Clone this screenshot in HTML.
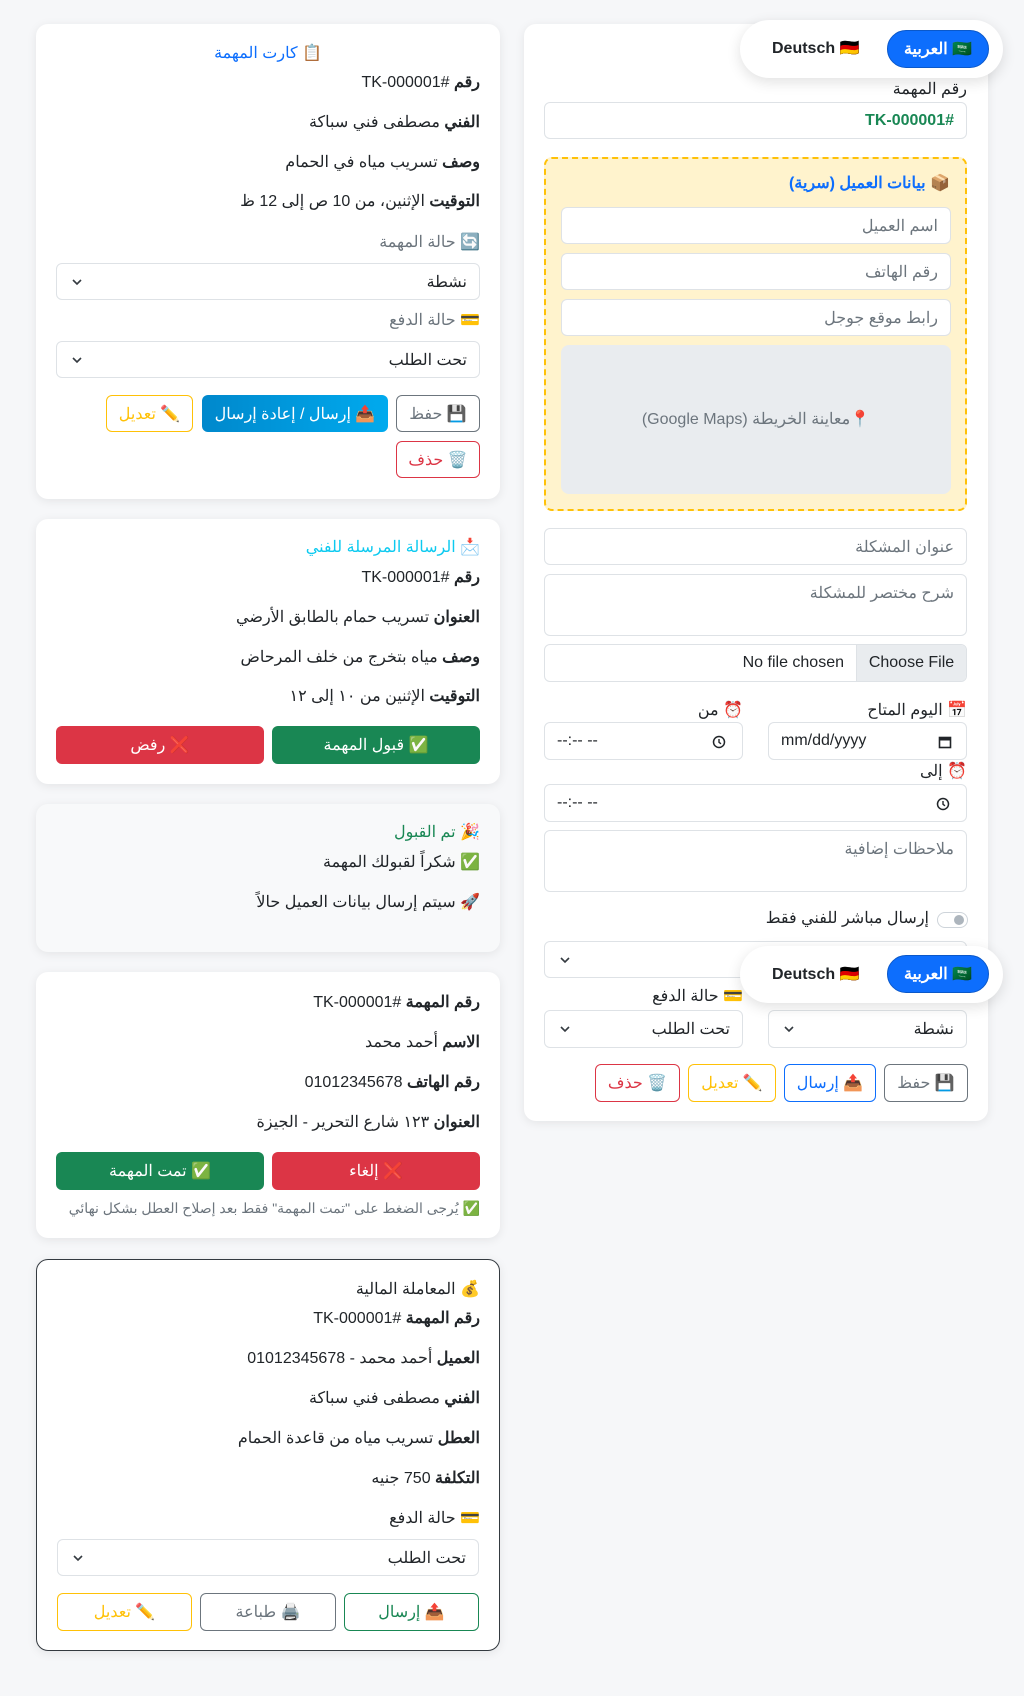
<!DOCTYPE html>
<html lang="ar" dir="rtl">
<head>
<meta charset="utf-8">
<style>
*{box-sizing:border-box;margin:0;padding:0}
html,body{width:1024px;height:1696px;background:#f6f7f9;overflow:hidden}
body{position:relative;font-family:"Liberation Sans","Noto Sans CJK SC",sans-serif;color:#212529;font-size:16px}
.c{position:absolute;background:#fff;border-radius:12px;box-shadow:0 2px 10px rgba(0,0,0,.08)}
.t{position:absolute;white-space:nowrap;direction:rtl;line-height:24px;font-size:16px}
.t b{font-weight:bold}
.f{position:absolute;border:1px solid #dee2e6;border-radius:6px;background:#fff}
.ph{position:absolute;right:12px;top:50%;transform:translateY(-50%);color:#6c757d;white-space:nowrap;direction:rtl}
.val{position:absolute;right:12px;top:50%;transform:translateY(-50%);color:#212529;white-space:nowrap;direction:rtl}
.chev{position:absolute;left:14px;top:50%;margin-top:-5px;width:12px;height:10px}
.b{position:absolute;display:flex;align-items:center;justify-content:center;border:1px solid;border-radius:6px;font-size:16px;white-space:nowrap;direction:rtl;background:#fff}
.pill{position:absolute;background:#fff;border-radius:30px;box-shadow:0 4px 14px rgba(0,0,0,.12)}
.ar{position:absolute;background:#0d6efd;color:#fff;border-radius:20px;font-weight:bold;display:flex;align-items:center;justify-content:center;border:1px solid #0a58ca}
.de{position:absolute;font-weight:bold;color:#212529;white-space:nowrap}
.tm{position:absolute;left:12px;top:50%;transform:translateY(-50%);white-space:nowrap}
</style>
</head>
<body>

<!-- LEFT CARD 1 -->
<div class="c" style="left:36px;top:24px;width:464px;height:475px"></div>
<div class="t" style="left:36px;width:464px;text-align:center;top:42px;color:#0d6efd">📋 كارت المهمة</div>
<div class="t" style="right:544px;top:71px"><b>رقم</b> #TK-000001</div>
<div class="t" style="right:544px;top:111px"><b>الفني</b> مصطفى فني سباكة</div>
<div class="t" style="right:544px;top:151px"><b>وصف</b> تسريب مياه في الحمام</div>
<div class="t" style="right:544px;top:190px"><b>التوقيت</b> الإثنين، من 10 ص إلى 12 ظ</div>
<div class="t" style="right:544px;top:231px;color:#6c757d">🔄 حالة المهمة</div>
<div class="f" style="left:56px;top:263px;width:424px;height:37px"><span class="val">نشطة</span><svg class="chev" viewBox="0 0 12 10"><path d="M2 3l4 4 4-4" fill="none" stroke="#343a40" stroke-width="1.6"/></svg></div>
<div class="t" style="right:544px;top:309px;color:#6c757d">💳 حالة الدفع</div>
<div class="f" style="left:56px;top:341px;width:424px;height:37px"><span class="val">تحت الطلب</span><svg class="chev" viewBox="0 0 12 10"><path d="M2 3l4 4 4-4" fill="none" stroke="#343a40" stroke-width="1.6"/></svg></div>
<div class="b" style="left:396px;top:395px;width:84px;height:37px;border-color:#6c757d;color:#6c757d">💾 حفظ</div>
<div class="b" style="left:202px;top:395px;width:186px;height:37px;border:none;color:#fff;background:linear-gradient(90deg,#0088cc,#00aaee)">📤 إرسال / إعادة إرسال</div>
<div class="b" style="left:106px;top:395px;width:87px;height:37px;border-color:#ffc107;color:#ffc107">✏️ تعديل</div>
<div class="b" style="left:396px;top:441px;width:84px;height:37px;border-color:#dc3545;color:#dc3545">🗑️ حذف</div>

<!-- LEFT CARD 2 -->
<div class="c" style="left:36px;top:519px;width:464px;height:265px"></div>
<div class="t" style="right:544px;top:536px;color:#0dcaf0">📩 الرسالة المرسلة للفني</div>
<div class="t" style="right:544px;top:566px"><b>رقم</b> #TK-000001</div>
<div class="t" style="right:544px;top:606px"><b>العنوان</b> تسريب حمام بالطابق الأرضي</div>
<div class="t" style="right:544px;top:646px"><b>وصف</b> مياه بتخرج من خلف المرحاض</div>
<div class="t" style="right:544px;top:685px"><b>التوقيت</b> الإثنين من ١٠ إلى ١٢</div>
<div class="b" style="left:272px;top:726px;width:208px;height:38px;border:none;background:#198754;color:#fff">✅ قبول المهمة</div>
<div class="b" style="left:56px;top:726px;width:208px;height:38px;border:none;background:#dc3545;color:#fff">❌ رفض</div>

<!-- LEFT CARD 3 -->
<div class="c" style="left:36px;top:804px;width:464px;height:148px;background:#f8f9fa"></div>
<div class="t" style="right:544px;top:821px;color:#198754">🎉 تم القبول</div>
<div class="t" style="right:544px;top:851px">✅ شكراً لقبولك المهمة</div>
<div class="t" style="right:544px;top:891px">🚀 سيتم إرسال بيانات العميل حالاً</div>

<!-- LEFT CARD 4 -->
<div class="c" style="left:36px;top:972px;width:464px;height:266px"></div>
<div class="t" style="right:544px;top:991px"><b>رقم المهمة</b> #TK-000001</div>
<div class="t" style="right:544px;top:1031px"><b>الاسم</b> أحمد محمد</div>
<div class="t" style="right:544px;top:1071px"><b>رقم الهاتف</b> 01012345678</div>
<div class="t" style="right:544px;top:1111px"><b>العنوان</b> ١٢٣ شارع التحرير - الجيزة</div>
<div class="b" style="left:272px;top:1152px;width:208px;height:38px;border:none;background:#dc3545;color:#fff">❌ إلغاء</div>
<div class="b" style="left:56px;top:1152px;width:208px;height:38px;border:none;background:#198754;color:#fff">✅ تمت المهمة</div>
<div class="t" style="right:544px;top:1198px;font-size:14px;line-height:20px;color:#6c757d">✅ يُرجى الضغط على "تمت المهمة" فقط بعد إصلاح العطل بشكل نهائي</div>

<!-- LEFT CARD 5 -->
<div class="c" style="left:36px;top:1259px;width:464px;height:392px;border:1px solid #343a40"></div>
<div class="t" style="right:544px;top:1278px">💰 المعاملة المالية</div>
<div class="t" style="right:544px;top:1307px"><b>رقم المهمة</b> #TK-000001</div>
<div class="t" style="right:544px;top:1347px"><b>العميل</b> أحمد محمد - 01012345678</div>
<div class="t" style="right:544px;top:1387px"><b>الفني</b> مصطفى فني سباكة</div>
<div class="t" style="right:544px;top:1427px"><b>العطل</b> تسريب مياه من قاعدة الحمام</div>
<div class="t" style="right:544px;top:1467px"><b>التكلفة</b> 750 جنيه</div>
<div class="t" style="right:544px;top:1507px">💳 حالة الدفع</div>
<div class="f" style="left:57px;top:1539px;width:422px;height:37px"><span class="val">تحت الطلب</span><svg class="chev" viewBox="0 0 12 10"><path d="M2 3l4 4 4-4" fill="none" stroke="#343a40" stroke-width="1.6"/></svg></div>
<div class="b" style="left:344px;top:1593px;width:135px;height:38px;border-color:#198754;color:#198754">📤 إرسال</div>
<div class="b" style="left:200px;top:1593px;width:136px;height:38px;border-color:#6c757d;color:#6c757d">🖨️ طباعة</div>
<div class="b" style="left:57px;top:1593px;width:135px;height:38px;border-color:#ffc107;color:#ffc107">✏️ تعديل</div>

<!-- RIGHT CARD -->
<div class="c" style="left:524px;top:24px;width:464px;height:1097px"></div>
<div class="t" style="right:57px;top:78px">رقم المهمة</div>
<div class="f" style="left:544px;top:102px;width:423px;height:37px"><span class="val" style="color:#198754;font-weight:bold">#TK-000001</span></div>
<div style="position:absolute;left:544px;top:157px;width:423px;height:354px;background:#fff3cd;border:2px dashed #ffc107;border-radius:8px"></div>
<div class="t" style="right:74px;top:172px;color:#0d6efd;font-weight:bold">📦 بيانات العميل (سرية)</div>
<div class="f" style="left:561px;top:207px;width:390px;height:37px"><span class="ph">اسم العميل</span></div>
<div class="f" style="left:561px;top:253px;width:390px;height:37px"><span class="ph">رقم الهاتف</span></div>
<div class="f" style="left:561px;top:299px;width:390px;height:37px"><span class="ph">رابط موقع جوجل</span></div>
<div style="position:absolute;left:561px;top:345px;width:390px;height:149px;background:#e9ecef;border-radius:8px"></div>
<div class="t" style="left:561px;width:390px;text-align:center;top:408px;color:#6c757d">📍معاينة الخريطة (Google Maps)</div>

<div class="f" style="left:544px;top:528px;width:423px;height:37px"><span class="ph">عنوان المشكلة</span></div>
<div class="f" style="left:544px;top:574px;width:423px;height:62px"><span class="ph" style="top:18px">شرح مختصر للمشكلة</span></div>
<div class="f" style="left:544px;top:644px;width:423px;height:38px;overflow:hidden"><div style="position:absolute;right:0;top:0;bottom:0;width:110px;background:#e9ecef;border-left:1px solid #dee2e6;display:flex;align-items:center;justify-content:center;direction:ltr">Choose File</div><span style="position:absolute;right:122px;top:50%;transform:translateY(-50%);direction:ltr;white-space:nowrap">No file chosen</span></div>

<div class="t" style="right:57px;top:699px">📅 اليوم المتاح</div>
<div class="t" style="right:281px;top:699px">⏰ من</div>
<div class="f" style="left:768px;top:722px;width:199px;height:38px"><span class="tm"><bdo dir="ltr">mm/dd/yyyy</bdo></span><svg style="position:absolute;right:14px;top:12px" width="14" height="14" viewBox="0 0 14 14"><rect x="1.5" y="2.5" width="11" height="10" fill="none" stroke="#212529" stroke-width="1.6"/><rect x="1.5" y="2.5" width="11" height="3" fill="#212529"/></svg></div>
<div class="f" style="left:544px;top:722px;width:199px;height:38px"><span class="tm"><bdo dir="ltr">--:-- --</bdo></span><svg style="position:absolute;right:16px;top:12px" width="14" height="14" viewBox="0 0 14 14"><circle cx="7" cy="7" r="5.5" fill="none" stroke="#212529" stroke-width="1.5"/><path d="M7 4v3.3l2 1.5" fill="none" stroke="#212529" stroke-width="1.4"/></svg></div>
<div class="t" style="right:57px;top:760px">⏰ إلى</div>
<div class="f" style="left:544px;top:784px;width:423px;height:38px"><span class="tm"><bdo dir="ltr">--:-- --</bdo></span><svg style="position:absolute;right:16px;top:12px" width="14" height="14" viewBox="0 0 14 14"><circle cx="7" cy="7" r="5.5" fill="none" stroke="#212529" stroke-width="1.5"/><path d="M7 4v3.3l2 1.5" fill="none" stroke="#212529" stroke-width="1.4"/></svg></div>
<div class="f" style="left:544px;top:830px;width:423px;height:62px"><span class="ph" style="top:18px">ملاحظات إضافية</span></div>

<div style="position:absolute;left:937px;top:912px;width:31px;height:16px;border:1px solid #ced4da;border-radius:8px;background:#fff"><div style="position:absolute;right:3px;top:2px;width:10px;height:10px;border-radius:50%;background:#adb5bd"></div></div>
<div class="t" style="right:95px;top:907px">إرسال مباشر للفني فقط</div>
<div class="f" style="left:544px;top:941px;width:423px;height:37px"><svg class="chev" viewBox="0 0 12 10"><path d="M2 3l4 4 4-4" fill="none" stroke="#343a40" stroke-width="1.6"/></svg></div>

<div class="t" style="right:281px;top:985px">💳 حالة الدفع</div>
<div class="f" style="left:768px;top:1010px;width:199px;height:38px"><span class="val">نشطة</span><svg class="chev" viewBox="0 0 12 10"><path d="M2 3l4 4 4-4" fill="none" stroke="#343a40" stroke-width="1.6"/></svg></div>
<div class="f" style="left:544px;top:1010px;width:199px;height:38px"><span class="val">تحت الطلب</span><svg class="chev" viewBox="0 0 12 10"><path d="M2 3l4 4 4-4" fill="none" stroke="#343a40" stroke-width="1.6"/></svg></div>
<div class="b" style="left:884px;top:1064px;width:84px;height:38px;border-color:#6c757d;color:#6c757d">💾 حفظ</div>
<div class="b" style="left:784px;top:1064px;width:92px;height:38px;border-color:#0d6efd;color:#0d6efd">📤 إرسال</div>
<div class="b" style="left:688px;top:1064px;width:88px;height:38px;border-color:#ffc107;color:#ffc107">✏️ تعديل</div>
<div class="b" style="left:595px;top:1064px;width:85px;height:38px;border-color:#dc3545;color:#dc3545">🗑️ حذف</div>

<!-- LANG TOGGLE 1 -->
<div class="pill" style="left:740px;top:20px;width:263px;height:58px"></div>
<div class="ar" style="left:887px;top:30px;width:102px;height:38px">🇸🇦 العربية</div>
<div class="de" style="left:772px;top:38px;direction:ltr">Deutsch 🇩🇪</div>

<!-- LANG TOGGLE 2 -->
<div class="pill" style="left:740px;top:946px;width:263px;height:57px"></div>
<div class="ar" style="left:887px;top:955px;width:102px;height:38px">🇸🇦 العربية</div>
<div class="de" style="left:772px;top:964px;direction:ltr">Deutsch 🇩🇪</div>

</body>
</html>
